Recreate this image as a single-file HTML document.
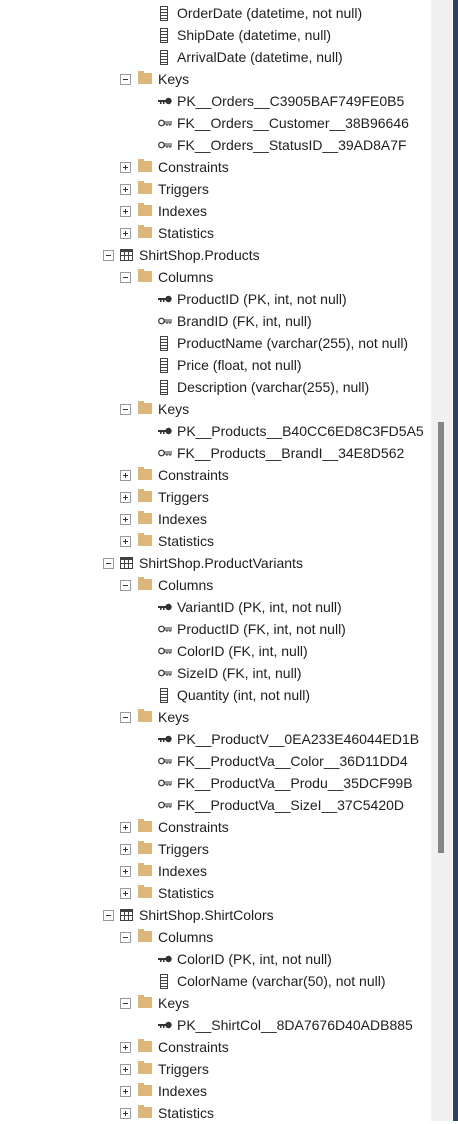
<!DOCTYPE html>
<html><head><style>
body{margin:0;width:458px;height:1121px;background:#fff;overflow:hidden;position:relative;font-family:"Segoe UI","Liberation Sans",sans-serif;font-size:14px;color:#1e1e1e}
.r{position:absolute;height:22px;line-height:22px;white-space:nowrap;left:0}
.t{position:absolute;top:0}
.ex{position:absolute;top:6px;width:9px;height:9px;border:1px solid #9a9a9a;background:#fff}
.ex:before{content:"";position:absolute;left:2px;top:4px;width:5px;height:1px;background:#333}
.ex.p:after{content:"";position:absolute;left:4px;top:2px;width:1px;height:5px;background:#333}
.fd{position:absolute;top:5px;width:14px;height:11px;background:#dcb67a}
.fd:before{content:"";position:absolute;left:0;top:-2px;width:6px;height:2px;background:#dcb67a}
.col{position:absolute;top:4px;width:6px;height:13px;border:1px solid #424242;background:repeating-linear-gradient(#fff 0 2px,#424242 2px 3px)}
.tb{position:absolute;top:5px;width:11px;height:10px;border:1px solid #424242;background:linear-gradient(90deg,transparent 3px,#424242 3px 4px,transparent 4px 7px,#424242 7px 8px,transparent 8px),linear-gradient(#424242 0 2px,transparent 2px 5px,#424242 5px 6px,transparent 6px)}
svg.k{position:absolute;top:6px}
#sb{position:absolute;left:431px;top:0;width:21px;height:1121px;background:#f0f0f0}
#th{position:absolute;left:438px;top:422px;width:6px;height:431px;background:#868686}
#ed{position:absolute;left:453px;top:0;width:5px;height:1121px;background:#2e4169}
</style></head><body>
<div id="sb"></div><div id="th"></div><div id="ed"></div>
<div id="tree"></div>
<script>
var P='<svg class="k" width="14" height="10" viewBox="0 0 14 10"><rect x="0" y="4" width="8" height="2" fill="#333"/><rect x="2" y="6" width="1.5" height="2" fill="#333"/><rect x="5" y="6" width="1.5" height="2" fill="#333"/><circle cx="10.5" cy="5" r="3.2" fill="#333"/></svg>';
var F='<svg class="k" width="14" height="10" viewBox="0 0 14 10"><circle cx="3.5" cy="5" r="2.8" fill="none" stroke="#333" stroke-width="1.2"/><path d="M6.3 4H14M6.3 6H14M9 6V8M12 6V8" stroke="#333" stroke-width="1" fill="none"/></svg>';
var rows=[
['c','OrderDate (datetime, not null)'],['c','ShipDate (datetime, null)'],['c','ArrivalDate (datetime, null)'],
['f-','Keys'],['p','PK__Orders__C3905BAF749FE0B5'],['k','FK__Orders__Customer__38B96646'],['k','FK__Orders__StatusID__39AD8A7F'],
['f+','Constraints'],['f+','Triggers'],['f+','Indexes'],['f+','Statistics'],
['t','ShirtShop.Products'],['f-','Columns'],['p','ProductID (PK, int, not null)'],['k','BrandID (FK, int, null)'],['c','ProductName (varchar(255), not null)'],['c','Price (float, not null)'],['c','Description (varchar(255), null)'],
['f-','Keys'],['p','PK__Products__B40CC6ED8C3FD5A5'],['k','FK__Products__BrandI__34E8D562'],
['f+','Constraints'],['f+','Triggers'],['f+','Indexes'],['f+','Statistics'],
['t','ShirtShop.ProductVariants'],['f-','Columns'],['p','VariantID (PK, int, not null)'],['k','ProductID (FK, int, not null)'],['k','ColorID (FK, int, null)'],['k','SizeID (FK, int, null)'],['c','Quantity (int, not null)'],
['f-','Keys'],['p','PK__ProductV__0EA233E46044ED1B'],['k','FK__ProductVa__Color__36D11DD4'],['k','FK__ProductVa__Produ__35DCF99B'],['k','FK__ProductVa__SizeI__37C5420D'],
['f+','Constraints'],['f+','Triggers'],['f+','Indexes'],['f+','Statistics'],
['t','ShirtShop.ShirtColors'],['f-','Columns'],['p','ColorID (PK, int, not null)'],['c','ColorName (varchar(50), not null)'],
['f-','Keys'],['p','PK__ShirtCol__8DA7676D40ADB885'],
['f+','Constraints'],['f+','Triggers'],['f+','Indexes'],['f+','Statistics']];
var h='';
rows.forEach(function(r,i){
 var y=2+22*i,s='<div class="r" style="top:'+y+'px">',ty=r[0];
 if(ty=='t'){s+='<div class="ex" style="left:103px"></div><div class="tb" style="left:120px"></div><span class="t" style="left:139px">'+r[1]+'</span>';}
 else if(ty[0]=='f'){s+='<div class="ex'+(ty=='f+'?' p':'')+'" style="left:120px"></div><div class="fd" style="left:138px"></div><span class="t" style="left:158px">'+r[1]+'</span>';}
 else{var ic=ty=='c'?'<div class="col" style="left:160px"></div>':(ty=='p'?P:F).replace('class="k"','class="k" style="left:158px"');s+=ic+'<span class="t" style="left:177px">'+r[1]+'</span>';}
 h+=s+'</div>';
});
document.getElementById('tree').innerHTML=h;
</script>
</body></html>
